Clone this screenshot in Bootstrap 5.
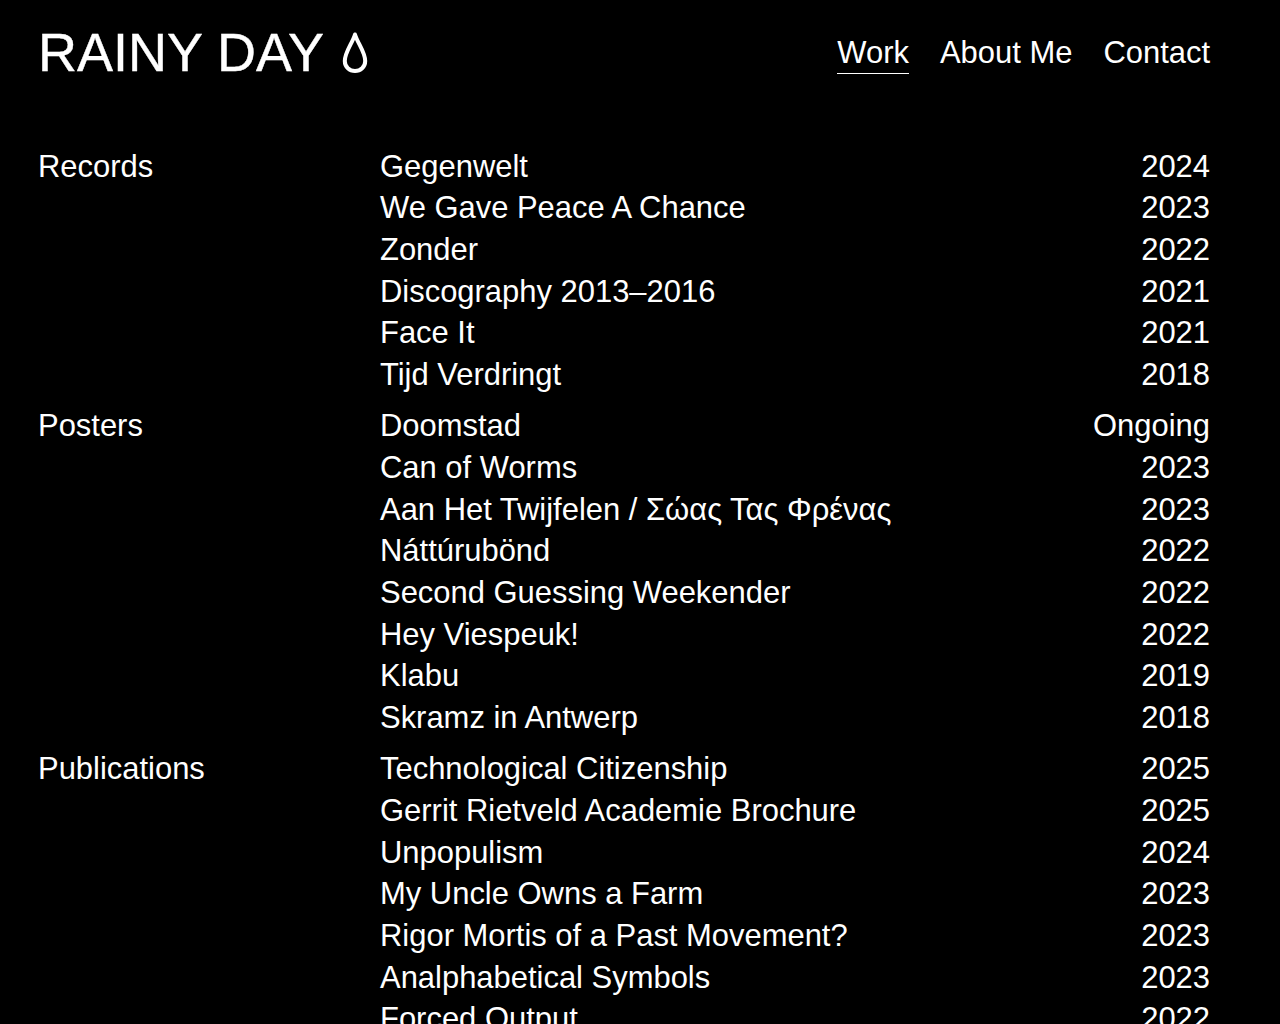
<!DOCTYPE html>
<html lang="en">
<head>
    <meta charset="UTF-8">
    <meta name="viewport" content="width=device-width, initial-scale=1.0">
    <title>Rainy Day - Work</title>
    <link rel="stylesheet" href="https://cdn.jsdelivr.net/npm/bootstrap@5.3.0/dist/css/bootstrap.min.css">
    <script src="https://cdn.jsdelivr.net/npm/bootstrap@5.3.0/dist/js/bootstrap.bundle.min.js" defer></script>
    <style>
        html, body {
            height: 100vh;
            overflow: hidden;
        }
        body {
            background-color: #000;
            color: #fff;
            font-family: "Liberation Sans", Arial, sans-serif;
            font-size: 30.95px;
            line-height: 41.7px;
        }
        .site-wrap {
            padding: 0 70px 0 38px;
        }
        .site-head {
            height: 145.55px;
            padding-top: 24px;
        }
        .site-logo {
            color: #fff;
            text-decoration: none;
            font-size: 54px;
            line-height: 57px;
            gap: 17px;
            -webkit-text-stroke: 0.4px #fff;
        }
        .site-logo svg {
            width: 28px;
            height: 44px;
        }
        .site-nav {
            gap: 31px;
            padding-top: 9.4px;
        }
        .site-nav a {
            color: #fff;
            text-decoration: none;
            line-height: 39.7px;
            border-bottom: 1px solid transparent;
        }
        .site-nav a.current {
            border-bottom-color: #fff;
        }
        .work-group {
            margin-bottom: 9.4px;
        }
        .work-label {
            width: 342px;
            flex-shrink: 0;
        }
    </style>
</head>
<body>
    <div class="site-wrap">
        <header class="site-head d-flex justify-content-between align-items-start">
            <a class="site-logo d-flex align-items-center" href="#">
                <span>RAINY DAY</span>
                <!-- druppel -->
                <svg viewBox="0 0 28 44" fill="none" stroke="#fff" stroke-width="4" stroke-linejoin="round">
                    <path d="M14 3.5 C11.5 12 3.8 21 3.8 30 C3.8 36 8.5 40 14 40 C19.5 40 24.2 36 24.2 30 C24.2 21 16.5 12 14 3.5 Z"/>
                </svg>
            </a>
            <nav class="site-nav d-flex">
                <a class="current" href="#">Work</a>
                <a href="#">About Me</a>
                <a href="#">Contact</a>
            </nav>
        </header>

        <main id="work-list"></main>
    </div>

    <script>
        const groups = [
            ['Records', [
                ['Gegenwelt', '2024'],
                ['We Gave Peace A Chance', '2023'],
                ['Zonder', '2022'],
                ['Discography 2013–2016', '2021'],
                ['Face It', '2021'],
                ['Tijd Verdringt', '2018']
            ]],
            ['Posters', [
                ['Doomstad', 'Ongoing'],
                ['Can of Worms', '2023'],
                ['Aan Het Twijfelen / Σώας Τας Φρένας', '2023'],
                ['Náttúrubönd', '2022'],
                ['Second Guessing Weekender', '2022'],
                ['Hey Viespeuk!', '2022'],
                ['Klabu', '2019'],
                ['Skramz in Antwerp', '2018']
            ]],
            ['Publications', [
                ['Technological Citizenship', '2025'],
                ['Gerrit Rietveld Academie Brochure', '2025'],
                ['Unpopulism', '2024'],
                ['My Uncle Owns a Farm', '2023'],
                ['Rigor Mortis of a Past Movement?', '2023'],
                ['Analphabetical Symbols', '2023'],
                ['Forced Output', '2022']
            ]]
        ];

        document.getElementById('work-list').innerHTML = groups.map(([label, items]) => `
            <section class="work-group d-flex">
                <div class="work-label">${label}</div>
                <div class="flex-grow-1">
                    ${items.map(([title, year]) => `
                        <div class="d-flex justify-content-between">
                            <span>${title}</span>
                            <span>${year}</span>
                        </div>
                    `).join('')}
                </div>
            </section>
        `).join('');
    </script>
</body>
</html>
